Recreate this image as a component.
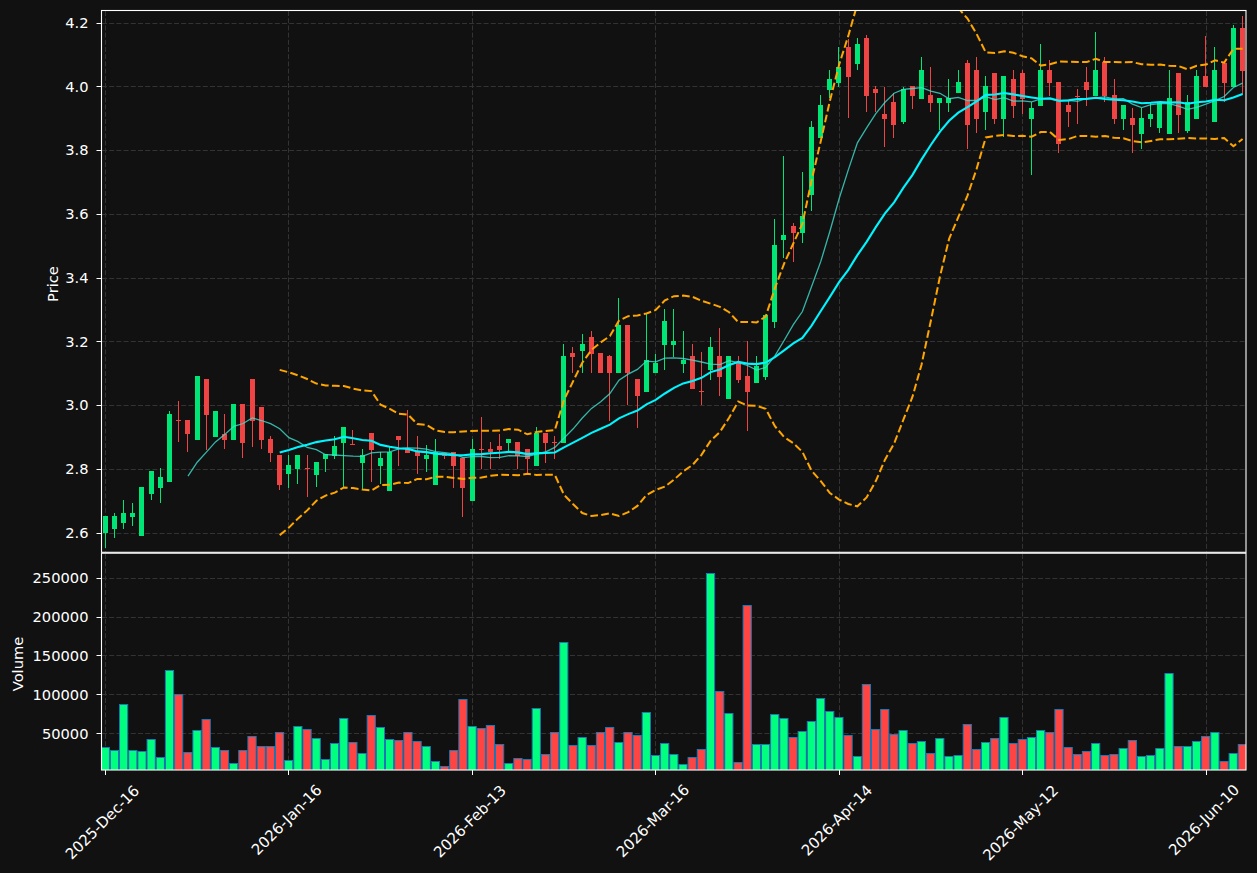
import React from "react";

// [up(1)/down(0), wickTop, bodyTop, bodyBottom, wickBottom, volumeTop]  (chart pixel coordinates)
const D: number[][] = [
[1,516,516,533,548,747],[1,513,516,529,538,750],[1,500,513,523,529,704],[1,503,513,517,526,750],[1,487,487,536,536,751],
[1,471,471,494,500,739],[1,468,477,488,503,757],[1,411,414,482,482,670],[0,401,420,421,442,694],[0,420,420,434,452,752],
[1,376,376,440,440,730],[0,379,379,415,450,719],[1,411,411,437,437,747],[0,414,434,440,449,750],[1,404,404,440,440,763],
[0,404,404,443,458,750],[0,379,379,421,447,736],[0,407,407,440,449,746],[0,436,439,453,462,746],[0,455,455,485,490,732],
[1,455,465,474,488,760],[1,455,455,469,484,726],[0,455,468,469,497,729],[1,462,462,475,487,738],[1,454,454,459,472,759],
[1,436,446,456,459,743],[1,427,427,443,487,718],[0,430,444,445,445,742],[1,449,455,463,490,753],[0,433,433,450,482,715],
[1,452,458,466,484,727],[1,447,452,491,491,739],[0,436,436,440,466,740],[0,410,449,453,453,732],[0,436,452,456,474,741],
[1,445,455,459,472,746],[1,439,452,485,485,761],[0,453,453,456,459,766],[0,452,452,466,488,750],[0,458,458,488,517,699],
[1,439,449,501,501,726],[0,417,449,450,469,728],[0,442,449,452,469,725],[0,434,446,450,459,744],[1,439,439,443,452,763],
[0,442,442,456,469,758],[0,449,449,459,473,759],[1,427,433,466,466,708],[0,433,433,443,463,754],[0,436,442,443,459,732],
[1,344,356,443,443,642],[0,347,353,357,373,745],[1,334,344,351,373,737],[0,331,337,354,373,745],[0,353,353,373,373,732],
[0,355,356,373,421,727],[1,298,325,373,373,742],[0,325,325,373,405,732],[0,379,379,396,428,735],[1,313,360,392,392,712],
[1,354,363,373,373,755],[1,309,321,345,370,743],[1,309,341,345,357,754],[1,331,360,364,373,764],[0,344,356,389,389,757],
[0,352,391,392,405,749],[1,337,347,370,380,573],[0,328,356,377,396,691],[1,356,356,399,399,713],[0,356,363,380,383,762],
[0,341,376,392,431,605],[1,356,366,383,383,744],[1,315,315,377,380,744],[1,219,245,322,328,714],[1,156,235,240,258,718],
[0,223,226,233,262,737],[1,172,216,233,243,731],[1,121,127,195,211,721],[1,95,105,138,138,698],[1,70,79,90,98,711],
[1,47,67,83,87,717],[0,39,47,77,118,735],[1,38,44,64,70,756],[0,35,38,96,112,684],[0,86,89,93,112,729],
[0,87,114,119,147,709],[0,93,102,125,138,734],[1,87,89,122,124,730],[0,86,86,96,109,743],[1,57,70,99,99,741],
[0,67,95,103,112,753],[1,98,98,103,130,738],[1,79,98,103,112,756],[1,70,82,93,93,755],[0,60,63,125,149,724],
[0,57,70,119,133,749],[1,76,86,112,130,742],[0,73,73,119,124,738],[1,76,76,119,137,717],[0,70,79,106,118,743],
[0,70,73,99,114,739],[1,102,108,119,175,737],[1,44,70,106,106,730],[0,60,70,83,96,732],[0,82,82,144,153,709],
[0,101,105,112,127,747],[0,89,96,97,124,754],[0,67,82,90,106,751],[1,32,70,96,96,743],[0,57,62,96,102,755],
[0,79,95,119,124,754],[1,105,105,119,130,748],[0,108,118,125,153,740],[1,108,118,134,149,756],[1,103,114,119,127,755],
[1,102,102,128,133,748],[1,70,98,134,134,673],[0,73,73,115,133,746],[1,95,102,131,133,746],[1,70,76,119,119,741],
[0,36,76,87,87,736],[1,47,70,122,122,732],[0,63,63,83,102,761],[1,25,28,87,87,753],[0,16,28,71,95,744],
];

const X = (i: number) => 105.3 + 9.17 * i;
const closes = D.map((d) => (d[0] ? d[2] : d[3]));

function rolling(n: number) {
  return closes.map((_, i) => {
    if (i < n - 1) return null;
    const w = closes.slice(i - n + 1, i + 1);
    const m = w.reduce((a, b) => a + b, 0) / n;
    const s = Math.sqrt(w.reduce((a, b) => a + (b - m) * (b - m), 0) / n);
    return { m, s };
  });
}
const r10 = rolling(10);
const r20 = rolling(20);
function pathOf(arr: ({ m: number; s: number } | null)[], f: (v: { m: number; s: number }) => number) {
  return arr
    .map((v, i) => (v ? `${(X(i) + 0.2).toFixed(1)},${f(v).toFixed(1)}` : ""))
    .filter(Boolean)
    .join(" ");
}

const priceTicks = ["4.2", "4.0", "3.8", "3.6", "3.4", "3.2", "3.0", "2.8", "2.6"].map((t, k) => ({ t, y: 22.5 + 63.75 * k }));
const volTicks = [
  ["250000", 577.7],
  ["200000", 616.5],
  ["150000", 655.4],
  ["100000", 694.3],
  ["50000", 733.3],
] as [string, number][];
const dateTicks = [
  ["2025-Dec-16", 105.5, 102.5, 822.5],
  ["2026-Jan-16", 288.5, 286.7, 820],
  ["2026-Feb-13", 472.5, 470, 821.5],
  ["2026-Mar-16", 655.5, 653, 821],
  ["2026-Apr-14", 839.5, 837, 820.5],
  ["2026-May-12", 1022.5, 1020.7, 823],
  ["2026-Jun-10", 1206.5, 1204, 820],
] as [string, number, number, number][];

const GRID = "#333333";

export default function App() {
  return (
    <div className="h-[873px] w-[1257px] overflow-hidden bg-[#111111]">
      <svg width={1257} height={873} viewBox="0 0 1257 873" className="block fill-white font-['DejaVu_Sans',sans-serif] text-[14.67px]">
        <defs>
          <clipPath id="upper"><rect x={102} y={11} width={1144} height={541} /></clipPath>
          <clipPath id="lower"><rect x={102} y={554} width={1144} height={216} /></clipPath>
        </defs>

        {/* grid */}
        <g stroke={GRID} strokeWidth={1} strokeDasharray="5 2.2" fill="none">
          {dateTicks.map(([t, x]) => (
            <g key={t}>
              <line x1={x} x2={x} y1={11} y2={552} />
              <line x1={x} x2={x} y1={554} y2={770} />
            </g>
          ))}
          {priceTicks.map(({ t, y }) => (
            <line key={t} x1={102} x2={1246} y1={Math.round(y) + 0.5} y2={Math.round(y) + 0.5} />
          ))}
          {volTicks.map(([t, y]) => (
            <line key={t} x1={102} x2={1246} y1={Math.round(y) + 0.5} y2={Math.round(y) + 0.5} />
          ))}
        </g>

        {/* candles */}
        <g clipPath="url(#upper)" shapeRendering="crispEdges">
          {D.map((d, i) => {
            const x = Math.floor(X(i));
            const c = d[0] ? "#00e676" : "#ef4444";
            return (
              <g key={i} fill={c}>
                <rect x={x} y={d[1]} width={1} height={d[4] - d[1]} />
                <rect x={x - 2} y={d[2]} width={5} height={Math.max(1, d[3] - d[2])} />
              </g>
            );
          })}
        </g>

        {/* overlays */}
        <g clipPath="url(#upper)" fill="none">
          <polyline points={pathOf(r10, (v) => v.m)} stroke="#40e0d0" strokeOpacity={0.8} strokeWidth={1.3} />
          <polyline points={pathOf(r20, (v) => v.m + 2 * v.s)} stroke="#ffa500" strokeWidth={2} strokeDasharray="7.7 3.3" />
          <polyline points={pathOf(r20, (v) => v.m - 2 * v.s)} stroke="#ffa500" strokeWidth={2} strokeDasharray="7.7 3.3" />
          <polyline points={pathOf(r20, (v) => v.m)} stroke="#00f5ff" strokeWidth={2.1} />
        </g>

        {/* volume */}
        <g clipPath="url(#lower)" stroke="#1f77b4" strokeWidth={1}>
          {D.map((d, i) => (
            <rect key={i} x={X(i) - 4.1} y={d[5] + 0.5} width={8.2} height={772 - d[5]} fill={d[0] ? "#00ff7f" : "#ff4444"} />
          ))}
        </g>

        {/* frames */}
        <g fill="none" stroke="#ffffff" strokeWidth={1.1}>
          <rect x={101.5} y={10.5} width={1144.5} height={541.8} />
          <rect x={101.5} y={553.2} width={1144.5} height={216.8} />
        </g>

        {/* ticks and labels */}
        <g stroke="#ffffff" strokeWidth={1}>
          {priceTicks.map(({ t, y }) => (
            <line key={t} x1={96.5} x2={101} y1={Math.round(y) + 0.5} y2={Math.round(y) + 0.5} />
          ))}
          {volTicks.map(([t, y]) => (
            <line key={t} x1={96.5} x2={101} y1={Math.round(y) + 0.5} y2={Math.round(y) + 0.5} />
          ))}
          {dateTicks.map(([t, x]) => (
            <line key={t} x1={x} x2={x} y1={770} y2={775} />
          ))}
        </g>
        {priceTicks.map(({ t, y }) => (
          <text key={t} x={88.5} y={y + 5.4} textAnchor="end">{t}</text>
        ))}
        {volTicks.map(([t, y]) => (
          <text key={t} x={88.5} y={y + 5.4} textAnchor="end">{t}</text>
        ))}
        {dateTicks.map(([t, , cx, cy]) => (
          <text key={t} className="text-[15px]" transform={`translate(${cx} ${cy}) rotate(-45)`} textAnchor="middle" y={5}>{t}</text>
        ))}
        <text transform="translate(57.5 284) rotate(-90)" textAnchor="middle">Price</text>
        <text transform="translate(22.5 664) rotate(-90)" textAnchor="middle">Volume</text>
      </svg>
    </div>
  );
}
